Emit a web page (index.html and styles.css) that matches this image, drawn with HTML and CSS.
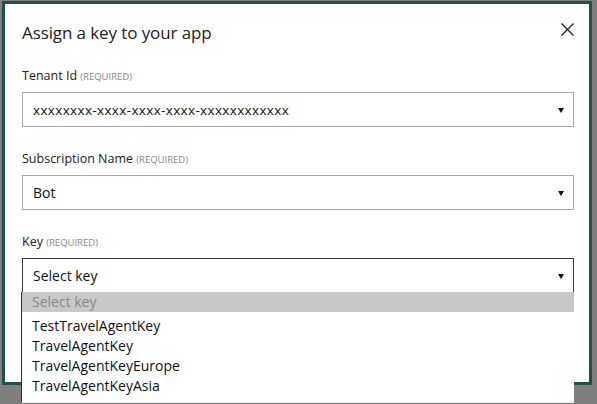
FILE: index.html
```html
<!DOCTYPE html>
<html>
<head>
<meta charset="utf-8">
<link rel="stylesheet" href="styles.css">
</head>
<body>
<div class="dialog">
  <div class="header">
    <h1 class="title">Assign a key to your app</h1>
    <svg class="close" width="13" height="13" viewBox="0 0 13 13"><path d="M0.5 0.5 L12.5 12.5 M12.5 0.5 L0.5 12.5" stroke="#222" stroke-width="1.3" fill="none"/></svg>
  </div>
  <div class="field">
    <div class="label">Tenant Id <span class="req">(REQUIRED)</span></div>
    <div class="select"><span class="value small">xxxxxxxx-xxxx-xxxx-xxxx-xxxxxxxxxxxx</span><span class="arrow"></span></div>
  </div>
  <div class="field">
    <div class="label">Subscription Name <span class="req">(REQUIRED)</span></div>
    <div class="select"><span class="value">Bot</span><span class="arrow"></span></div>
  </div>
  <div class="field last">
    <div class="label">Key <span class="req">(REQUIRED)</span></div>
    <div class="select open"><span class="value">Select key</span><span class="arrow"></span>
      <ul class="list">
        <li class="placeholder">Select key</li>
        <li>TestTravelAgentKey</li>
        <li>TravelAgentKey</li>
        <li>TravelAgentKeyEurope</li>
        <li>TravelAgentKeyAsia</li>
      </ul>
    </div>
  </div>
</div>
</body>
</html>
```

FILE: styles.css
```css
html, body {
  margin: 0;
  padding: 0;
  height: 100%;
}
body {
  background: #7f7f7f;
  font-family: "Open Sans", "Noto Sans", sans-serif;
  color: #111;
  overflow: hidden;
}
.dialog {
  margin: 1px 0 0 2px;
  width: 584px;
  height: 378px;
  border: 3px solid #22504f;
  background: #fff;
  padding: 0;
  box-sizing: content-box;
}
.header {
  display: flex;
  justify-content: space-between;
  align-items: flex-start;
  padding: 18px 15px 0 17px;
  height: 22px;
}
.title {
  margin: 0;
  font-weight: 400;
  font-size: 17px;
  line-height: 22px;
  color: #222;
  letter-spacing: -0.1px;
}
.close {
  display: block;
  margin-top: 1px;
}
.field {
  padding: 0 15px 0 17px;
}
.label {
  font-size: 12.5px;
  line-height: 16px;
  color: #222;
  margin-top: 24px;
  margin-bottom: 7px;
}
.req {
  font-size: 9.5px;
  color: #888;
}
.select {
  position: relative;
  height: 33px;
  border: 1px solid #a9a9a9;
  display: flex;
  align-items: center;
  justify-content: space-between;
  padding: 0 9px 0 10px;
}
.select.open {
  border-color: #3a3a3a;
  border-bottom-color: #9fb4cc;
}
.value {
  font-size: 14px;
  color: #111;
}
.value.small {
  font-size: 13.5px;
  letter-spacing: 0.35px;
}
.arrow {
  width: 0;
  height: 0;
  border-left: 3px solid transparent;
  border-right: 3px solid transparent;
  border-top: 5px solid #111;
  margin-top: 1px;
}
.list {
  position: absolute;
  left: -2px;
  right: -1px;
  top: 33px;
  margin: 0;
  padding: 0;
  list-style: none;
  background: #fff;
  border-left: 1px solid #2e2e2e;
  height: 110px;
  border-bottom: 1px solid #e6e6e6;
}
.list li {
  font-size: 14px;
  line-height: 20px;
  padding-left: 10px;
  color: #111;
}
.list li.placeholder {
  background: #c8c8c8;
  color: #8a8a8a;
  margin-bottom: 4px;
}
```
